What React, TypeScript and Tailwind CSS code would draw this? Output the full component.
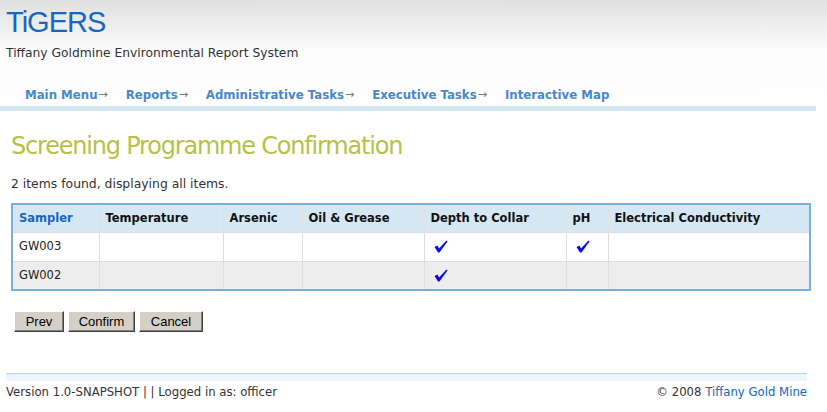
import React from "react";

const cols = [
  { label: "Sampler", w: "w-[87px]" },
  { label: "Temperature", w: "w-[124px]" },
  { label: "Arsenic", w: "w-[79px]" },
  { label: "Oil & Grease", w: "w-[122px]" },
  { label: "Depth to Collar", w: "w-[142px]" },
  { label: "pH", w: "w-[42px]" },
  { label: "Electrical Conductivity", w: "" },
];

const rows = [
  { id: "GW003", checks: [false, false, false, true, true, false] },
  { id: "GW002", checks: [false, false, false, true, false, false] },
];

function Check() {
  return (
    <svg width="14" height="13" viewBox="0 0 14 13" className="block">
      <path d="M0.5 7 L3.5 5.5 L5 8.5 L12.5 0.5 L13.5 1.5 L5.5 12.5 L4 12.5 Z" fill="#0a0af0" />
    </svg>
  );
}

function NavItem({ label, arrow = true }: { label: string; arrow?: boolean }) {
  return (
    <span className="flex items-center font-bold text-[#4a87c8]">
      {label}
      {arrow && <span className="ml-[1px] text-[11px] font-normal text-[#777]">→</span>}
    </span>
  );
}

function Btn({ label, w }: { label: string; w: string }) {
  return (
    <button
      type="button"
      className={`h-[21px] ${w} border border-t-[#fff] border-l-[#fff] border-r-[#404040] border-b-[#404040] bg-[#d4d0c8] font-['Liberation_Sans',Arial,sans-serif] text-[13px] leading-[15px] text-black shadow-[inset_-1px_-1px_0_#808080]`}
    >
      {label}
    </button>
  );
}

export default function App() {
  return (
    <div className="min-h-[412px] bg-white font-['DejaVu_Sans',Verdana,sans-serif] text-[12px] text-[#333]">
      <header className="bg-gradient-to-b from-[#e0e0e0] via-[#fbfbfb] via-45% to-white">
        <div className="px-[6px] pt-[5px]">
          <div className="font-['Liberation_Sans',Arial,sans-serif] text-[29px] leading-[34px] tracking-[-1px] text-[#1666c2]">
            TiGERS
          </div>
          <div className="mt-[7px] text-[12.3px] leading-[14px] text-[#333]">
            Tiffany Goldmine Environmental Report System
          </div>
        </div>
        <nav className="mt-[28px] flex gap-[18px] pl-[25px] text-[11.75px] leading-[14px]">
          <NavItem label="Main Menu" />
          <NavItem label="Reports" />
          <NavItem label="Administrative Tasks" />
          <NavItem label="Executive Tasks" />
          <NavItem label="Interactive Map" arrow={false} />
        </nav>
        <div className="mt-[4px] h-[5px] w-[816px] bg-[#d6e7f4]" />
      </header>

      <main className="px-[11px]">
        <h1 className="mt-[21px] text-[24px] leading-[28px] tracking-[-1.2px] text-[#b5c247]">
          Screening Programme Confirmation
        </h1>
        <p className="mt-[17px] text-[12.4px] leading-[14px]">2 items found, displaying all items.</p>

        <table className="mt-[12px] w-[800px] border-collapse border-2 border-[#78b0da] text-[11.5px]">
          <thead>
            <tr className="h-[28px] bg-[#d6e7f4]">
              {cols.map((c, i) => (
                <th
                  key={c.label}
                  className={`${c.w} border-x border-[#e0e0e0] px-[6px] text-left font-bold ${i === 0 ? "text-[#1666c2]" : "text-[#111]"}`}
                >
                  {c.label}
                </th>
              ))}
            </tr>
          </thead>
          <tbody>
            {rows.map((r, ri) => (
              <tr key={r.id} className={`h-[29px] ${ri % 2 ? "bg-[#ededed]" : "bg-white"}`}>
                <td className="border border-[#dedede] px-[6px] text-[#222]">{r.id}</td>
                {r.checks.map((on, ci) => (
                  <td key={ci} className="border border-[#dedede] px-[9px]">
                    {on && <Check />}
                  </td>
                ))}
              </tr>
            ))}
          </tbody>
        </table>

        <div className="mt-[20px] flex gap-[4px] pl-[3px]">
          <Btn label="Prev" w="w-[50px]" />
          <Btn label="Confirm" w="w-[67px]" />
          <Btn label="Cancel" w="w-[64px]" />
        </div>
      </main>

      <footer className="mx-[6px] mt-[41px] w-[801px]">
        <div className="h-[1px] bg-[#cccccc]" />
        <div className="h-[7px] bg-[#eaf5fc]" />
        <div className="mt-[4px] flex justify-between text-[11.7px] leading-[14px] text-[#333]">
          <span>Version 1.0-SNAPSHOT | | Logged in as: officer</span>
          <span>
            © 2008 <span className="text-[#1666c2]">Tiffany Gold Mine</span>
          </span>
        </div>
      </footer>
    </div>
  );
}
